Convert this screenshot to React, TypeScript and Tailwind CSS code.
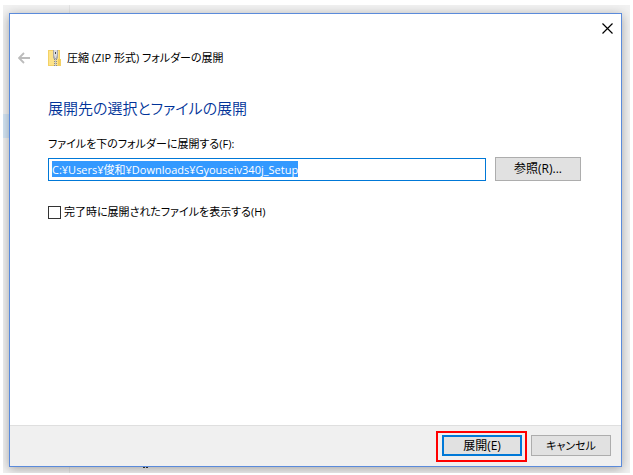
import { useEffect, useRef, useState } from "react"
import clsx from "clsx"

const buttonBase = "border bg-[#e1e1e1] leading-4 text-black"

function BackArrow() {
  return (
    <svg width="12" height="12" viewBox="0 0 12 12" fill="none" stroke="#bcbcbc" strokeWidth="1.8">
      <path d="M12 6H1M6 1L1 6l5 5" />
    </svg>
  )
}

function ZipFolder() {
  return (
    <svg width="13" height="16" viewBox="0 0 13 16">
      <path d="M0 0h12v9h1v7H0z" fill="#f3d166" />
      <path d="M1 1h10v14H1z" fill="#fde38a" />
      <path d="M10 9h2v6h-2z" fill="#f5cf5c" />
      <path d="M5 0h5v8l-1 1H6L5 8z" fill="#a9a9a9" />
      <path d="M6 0h3v5L8 8H7L6 5z" fill="#dedede" />
      <path d="M7 2h1v2H7z" fill="#444" />
      <path d="M7.500 9v7" stroke="#8a8a8a" strokeWidth="3" strokeDasharray="1 1" />
      <path d="M7.500 9v7" stroke="#c8c8c8" strokeWidth="1" />
    </svg>
  )
}

function CloseIcon() {
  return (
    <svg width="11" height="11" viewBox="0 0 11 11" stroke="#000" strokeWidth="1.2">
      <path d="M.5.5l10 10M10.500.5l-10 10" />
    </svg>
  )
}

export default function App() {
  const [path, setPath] = useState("C:¥Users¥俊和¥Downloads¥Gyouseiv340j_Setup")
  const [showFiles, setShowFiles] = useState(false)
  const pathRef = useRef<HTMLInputElement>(null)

  useEffect(() => {
    pathRef.current?.focus()
    pathRef.current?.select()
  }, [])

  return (
    <div className="flex min-h-screen bg-white pt-[5px] pr-[3px] pb-[2px] pl-[3px] font-['Open_Sans','Noto_Sans_CJK_JP',sans-serif] text-[11px] text-black [font-feature-settings:'palt']">
      <div className="relative flex flex-1 overflow-hidden bg-[#f1f1f1] px-[6px] pt-2 pb-[6px]">
        {/* window behind the dialog */}
        <div className="absolute inset-y-0 left-[66px] w-px bg-[#e4e4e4]" />
        <div className="absolute top-[109px] left-0 h-6 w-3 bg-[#d5e6f5]" />
        <svg className="absolute bottom-[4px] left-[140px]" width="6" height="3" viewBox="0 0 6 3">
          <path d="M0 1h2M3 1h2" stroke="#333" strokeWidth="2" />
        </svg>

        <main className="relative mr-[2px] flex flex-1 flex-col border border-[#5b8bdb] bg-white shadow-[0_2px_10px_rgba(0,0,0,0.32)]">
          <div className="flex h-7 justify-end px-2 pt-[9px]">
            <button type="button" aria-label="閉じる" className="h-[11px]">
              <CloseIcon />
            </button>
          </div>
          <header className="flex h-8 items-center pl-2">
            <button type="button" aria-label="戻る" disabled>
              <BackArrow />
            </button>
            <div className="ml-[18px] flex items-center gap-[6px]">
              <ZipFolder />
              <span className="leading-4">圧縮 (ZIP 形式) フォルダーの展開</span>
            </div>
          </header>

          <section className="flex-1 pt-[22px] pr-10 pl-[38px]">
            <h1 className="text-[15px] leading-6 font-[350] text-[#003399]">展開先の選択とファイルの展開</h1>
            <label htmlFor="path" className="mt-4 block leading-4">
              ファイルを下のフォルダーに展開する(F):
            </label>
            <div className="mt-[5px] flex items-end gap-[9px]">
              <input
                id="path"
                ref={pathRef}
                value={path}
                onChange={(e) => setPath(e.target.value)}
                className="h-[23px] min-w-0 flex-1 border border-[#0078d7] bg-white px-[3px] pb-[2px] leading-4 outline-none selection:bg-[#3399ff] selection:text-white"
              />
              <button type="button" className={clsx(buttonBase, "h-6 w-[86px] border-[#adadad] text-xs")}>
                参照(R)...
              </button>
            </div>
            <label className="mt-[23px] flex items-center gap-[3px] leading-4">
              <input
                type="checkbox"
                checked={showFiles}
                onChange={(e) => setShowFiles(e.target.checked)}
                className="size-[13px] appearance-none border border-[#333] bg-white checked:bg-[#0078d7]"
              />
              完了時に展開されたファイルを表示する(H)
            </label>
          </section>

          <footer className="flex justify-end gap-[9px] border-t border-[#dfdfdf] bg-[#f0f0f0] px-[10px] pt-[9px] pb-[10px]">
            <div className="relative">
              <button type="button" className={clsx(buttonBase, "h-[21px] w-20 border-2 border-[#0078d7] text-xs")}>
                展開(E)
              </button>
              <div className="pointer-events-none absolute -top-1 -right-[5px] -bottom-[6px] -left-[6px] border-2 border-[#ff0000]" />
            </div>
            <button type="button" className={clsx(buttonBase, "h-[21px] w-20 border-[#adadad]")}>
              キャンセル
            </button>
          </footer>
        </main>
      </div>
    </div>
  )
}
